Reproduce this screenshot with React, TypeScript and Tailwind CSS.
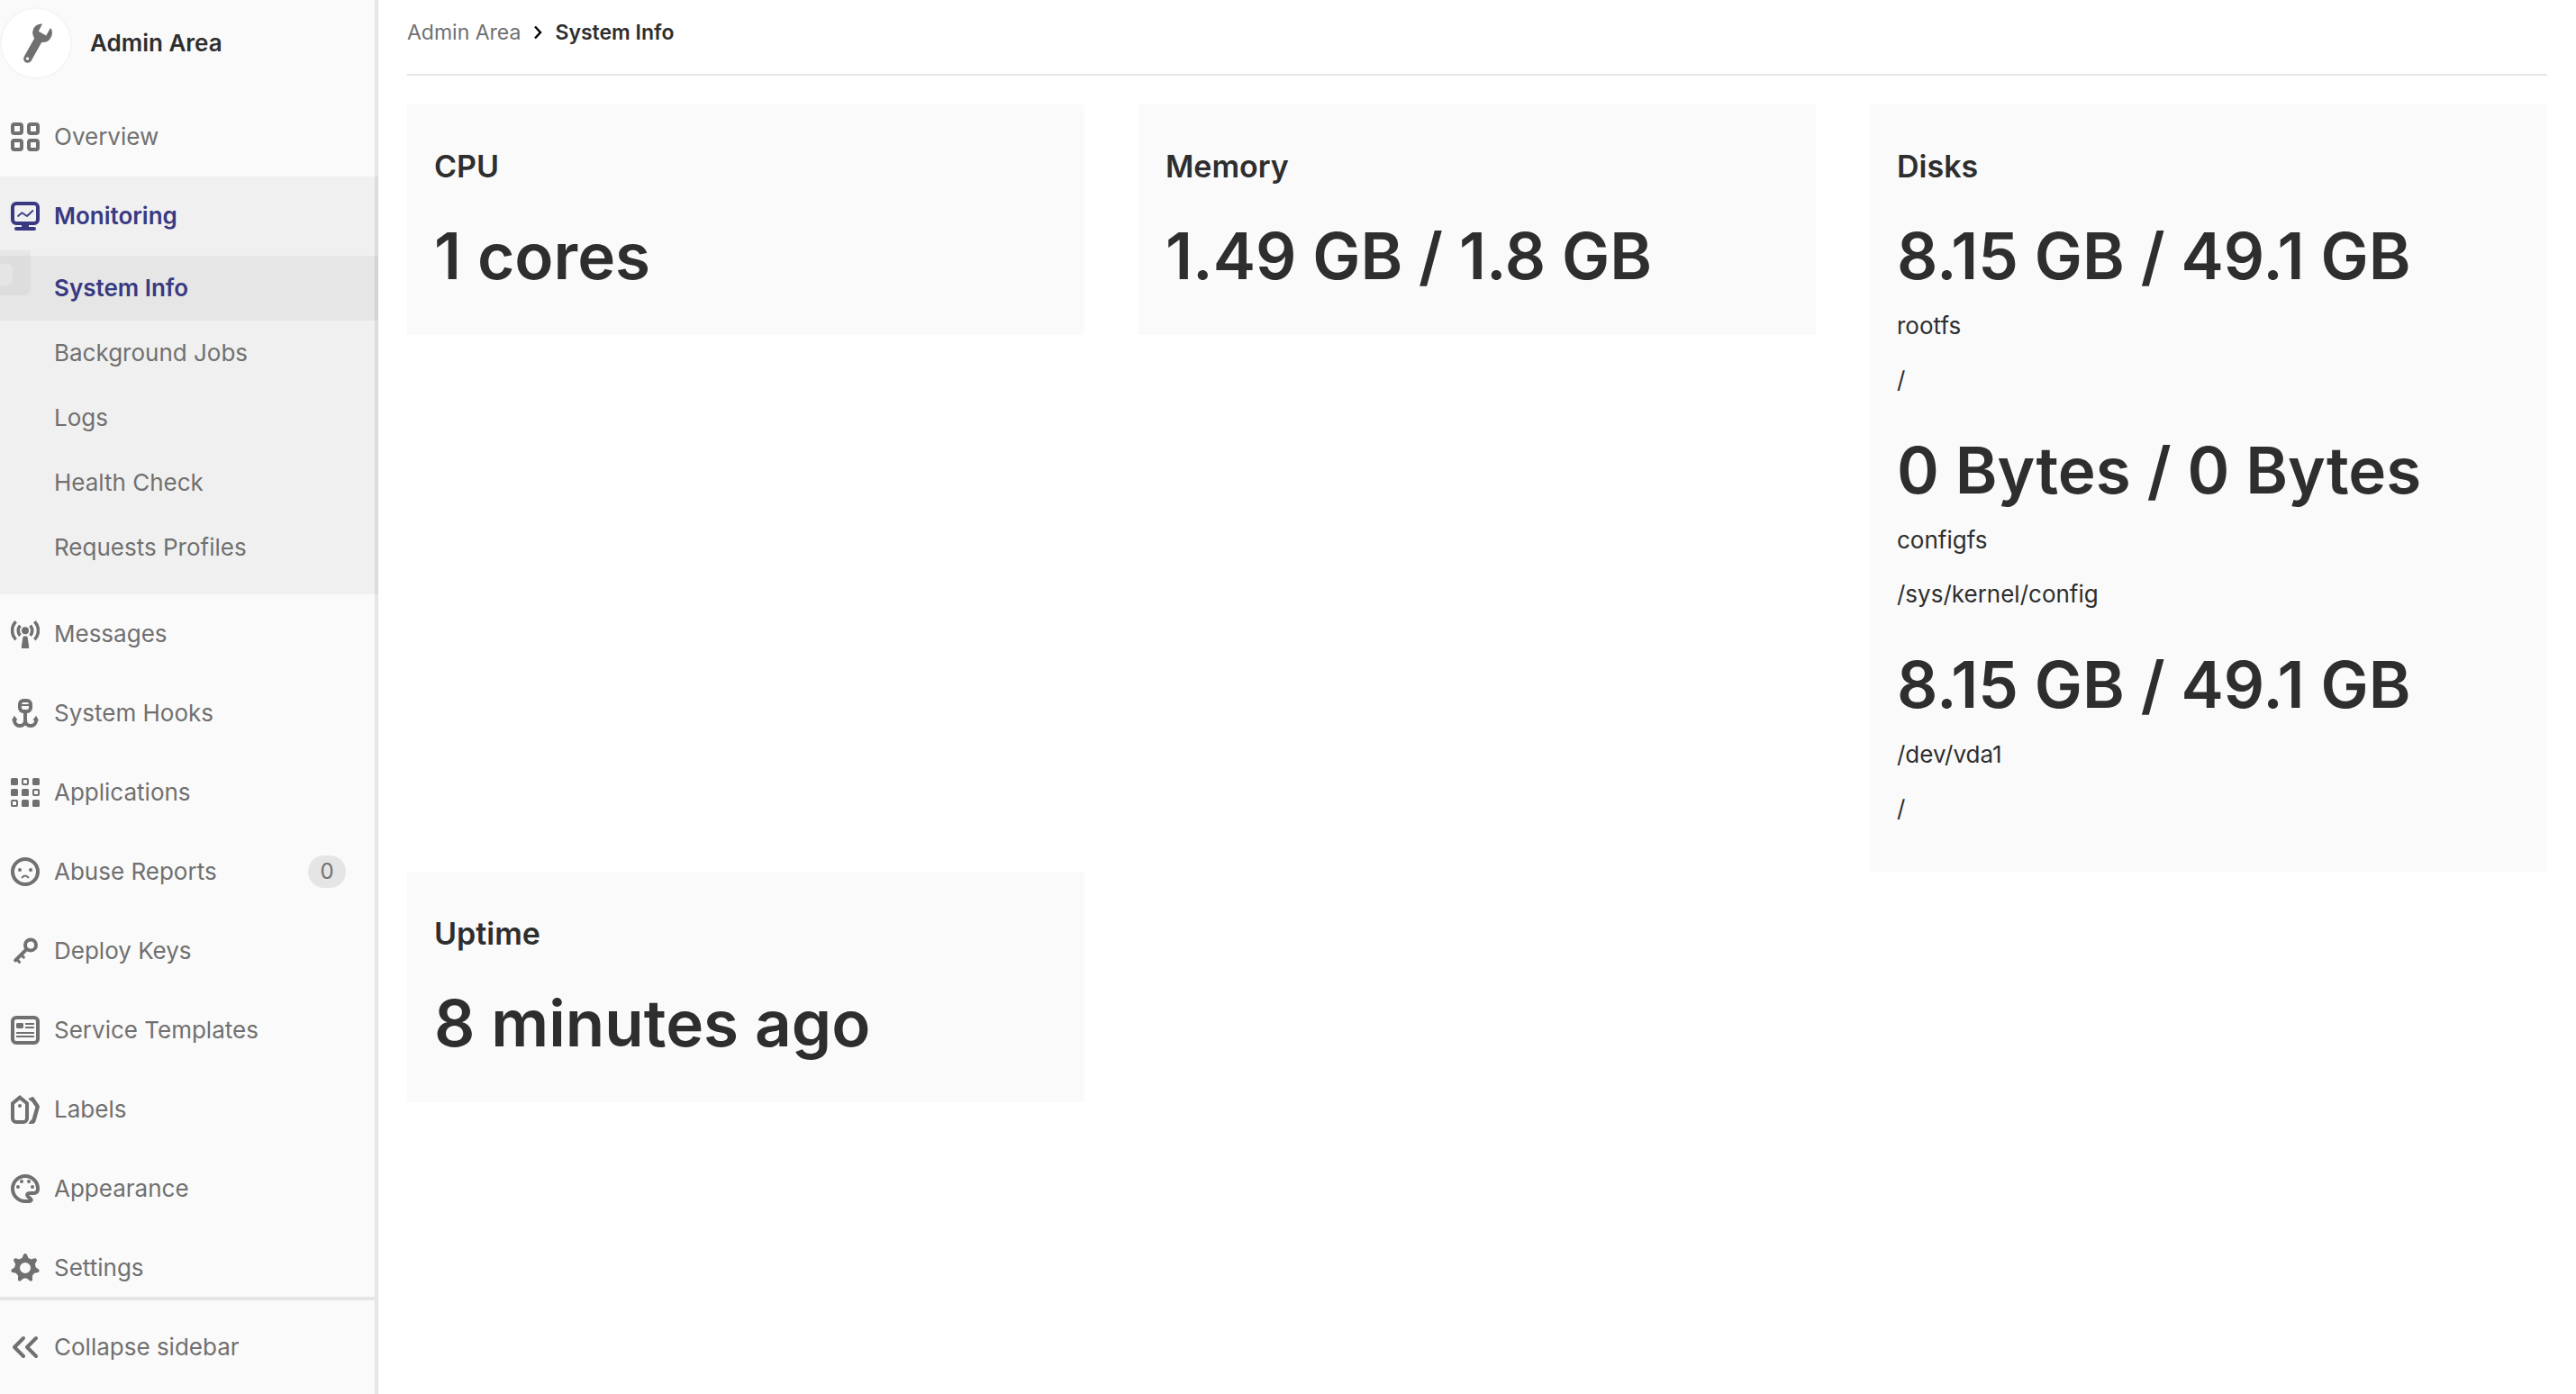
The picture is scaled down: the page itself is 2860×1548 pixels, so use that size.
import type { ReactNode } from "react";

function Icon({ children }: { children: ReactNode }) {
  return (
    <svg viewBox="0 0 16 16" className="size-8 shrink-0" fill="none" stroke="currentColor" strokeWidth="2" aria-hidden="true">
      {children}
    </svg>
  );
}

const OverviewIcon = () => (
  <Icon>
    <rect x="1" y="1" width="5" height="5" rx="1" />
    <rect x="10" y="1" width="5" height="5" rx="1" />
    <rect x="1" y="10" width="5" height="5" rx="1" />
    <rect x="10" y="10" width="5" height="5" rx="1" />
  </Icon>
);

const MonitorIcon = () => (
  <Icon>
    <rect x="1" y="1" width="14" height="11" rx="2" />
    <path d="M6 13h4v1H6z" fill="currentColor" stroke="none" />
    <path d="M3 15h10" strokeLinecap="round" />
    <path d="M4 8l2.2-1.9L9 8l3.2-3" strokeWidth="0.9" strokeLinecap="round" strokeLinejoin="round" />
  </Icon>
);

const MessagesIcon = () => (
  <Icon>
    <circle cx="8" cy="6.1" r="2" fill="currentColor" stroke="none" />
    <path d="M7.3 9.2h1.4q.5 0 .6.6l.8 5.4q.1.8-.7.8H6.6q-.8 0-.7-.8l.8-5.4q.1-.6.6-.6z" fill="currentColor" stroke="none" />
    <path d="M2.8 1.1a7.2 7.2 0 0 0 0 10M13.2 1.1a7.2 7.2 0 0 1 0 10" strokeWidth="1.8" />
    <path d="M5.2 3.3a4.2 4.2 0 0 0 0 5.6M10.8 3.3a4.2 4.2 0 0 1 0 5.6" strokeWidth="1.8" />
  </Icon>
);

const HookIcon = () => (
  <Icon>
    <rect x="5" y="1" width="6" height="6" rx="2" />
    <path d="M6 3.5h4" strokeWidth="1" />
    <path d="M8 7v5M2 11v1a3 3 0 0 0 6 0 3 3 0 0 0 6 0v-1" />
    <path d="M.5 12.1l1.4-2.7 1.9 2.3zM15.5 12.1l-1.4-2.7-1.9 2.3z" fill="currentColor" stroke="none" />
  </Icon>
);

const ApplicationsIcon = () => (
  <Icon>
    <g fill="currentColor" stroke="none">
      <rect x="0" y="0" width="4" height="4" rx="0.8" />
      <rect x="12" y="0" width="4" height="4" rx="0.8" />
      <rect x="0" y="6" width="4" height="4" rx="0.8" />
      <rect x="6" y="6" width="4" height="4" rx="0.8" />
      <rect x="6" y="12" width="4" height="4" rx="0.8" />
      <rect x="12" y="12" width="4" height="4" rx="0.8" />
    </g>
    <g strokeWidth="1">
      <rect x="6.5" y="0.5" width="3" height="3" rx="0.4" />
      <rect x="12.5" y="6.5" width="3" height="3" rx="0.4" />
      <rect x="0.5" y="12.5" width="3" height="3" rx="0.4" />
    </g>
  </Icon>
);

const AbuseIcon = () => (
  <Icon>
    <circle cx="8" cy="8" r="7" />
    <circle cx="5" cy="7" r="1" fill="currentColor" stroke="none" />
    <circle cx="11" cy="7" r="1" fill="currentColor" stroke="none" />
    <path d="M6.3 11.2q1.7-2 3.4 0" strokeWidth="1" strokeLinecap="round" />
  </Icon>
);

const KeyIcon = () => (
  <Icon>
    <circle cx="11" cy="4.7" r="3" />
    <path d="M8.9 6.9l-6.3 6.3" strokeLinecap="round" />
    <path d="M3.4 12.6l1.4 1.6M6 10.2l1.2 1.4" strokeWidth="1.5" strokeLinecap="round" />
  </Icon>
);

const TemplateIcon = () => (
  <Icon>
    <rect x="1" y="1" width="14" height="14" rx="2" />
    <rect x="3" y="4" width="4" height="3" rx="0.7" fill="currentColor" stroke="none" />
    <path d="M8.4 4.5h4.2M8.4 6.5h4.2M3.4 9.5h9.2M3.4 11.5h9.2" strokeWidth="1" strokeLinecap="round" />
  </Icon>
);

const LabelsIcon = () => (
  <Icon>
    <path d="M1 4.6l4-3.3 4 3.3V13a2 2 0 0 1-2 2H3a2 2 0 0 1-2-2z" />
    <circle cx="5" cy="6" r="1" fill="currentColor" stroke="none" />
    <path
      d="M9.7 2l2-.9q.7-.2 1.1.3l2.8 4.1q.5.6.3 1.4l-2 7.2Q13.4 16 11.9 16H9.8l1-1.7q.8-.3 1-1l1.9-6.7-2.1-3q-.5-.4-1-.5z"
      fill="currentColor"
      stroke="none"
    />
  </Icon>
);

const PaletteIcon = () => (
  <Icon>
    <path d="M8 1a7 7 0 1 0 0 14h2.3c1.2 0 1.3-.9.6-1.5l-1.1-.9c-1.2-1-.8-2.1.7-2.1h2.2c1.5 0 2.3-1 2.3-2.5A7 7 0 0 0 8 1z" />
    <g fill="currentColor" stroke="none">
      <circle cx="4" cy="7" r="1" />
      <circle cx="6" cy="4" r="1" />
      <circle cx="10" cy="4" r="1" />
      <circle cx="12" cy="7" r="1" />
    </g>
  </Icon>
);

const toothAngles = [0, 51.43, 102.86, 154.29, 205.71, 257.14, 308.57];

const GearIcon = () => (
  <Icon>
    <circle cx="8" cy="8" r="4.4" strokeWidth="2.8" />
    {toothAngles.map((angle) => (
      <path key={angle} d="M6 3.2L6.9 1q.2-1 1.1-1t1.1 1L10 3.2z" fill="currentColor" stroke="none" transform={`rotate(${angle} 8 8)`} />
    ))}
  </Icon>
);

const CollapseIcon = () => (
  <Icon>
    <path d="M7 3L2 8l5 5M14 3L9 8l5 5" strokeLinecap="round" strokeLinejoin="round" />
  </Icon>
);

const WrenchIcon = () => (
  <svg viewBox="0 0 32 44" className="h-11 w-8" fill="#707070" aria-hidden="true">
    <path
      fillRule="evenodd"
      d="M21 .4Q16 .2 12.7 3.6 9.4 7.2 10.4 12q.4 2.5 1.8 4.6L.8 36.8q-1.9 4.3 1.7 6.4 3.8 1.7 6.2-1.7L20.2 21q5.6.6 9-3.2 3.7-4.6 2.4-10.1-.5-1.6-1.6-2.7l-4.8 8.4-8.4-4.7zM4.5 37.4a1.7 1.7 0 1 1 0 3.4 1.7 1.7 0 0 1 0-3.4z"
    />
  </svg>
);

const subItems = ["System Info", "Background Jobs", "Logs", "Health Check", "Requests Profiles"];

const lowerItems: { label: string; icon: ReactNode; badge?: string }[] = [
  { label: "Messages", icon: <MessagesIcon /> },
  { label: "System Hooks", icon: <HookIcon /> },
  { label: "Applications", icon: <ApplicationsIcon /> },
  { label: "Abuse Reports", icon: <AbuseIcon />, badge: "0" },
  { label: "Deploy Keys", icon: <KeyIcon /> },
  { label: "Service Templates", icon: <TemplateIcon /> },
  { label: "Labels", icon: <LabelsIcon /> },
  { label: "Appearance", icon: <PaletteIcon /> },
  { label: "Settings", icon: <GearIcon /> },
];

function NavLink({ label, icon, badge }: { label: string; icon: ReactNode; badge?: string }) {
  return (
    <a href="#" className="flex h-22 items-center gap-4 pr-9 pl-3">
      {icon}
      <span className="flex-1">{label}</span>
      {badge && (
        <span className="flex h-9 w-[42px] items-center justify-center rounded-full bg-[#e5e5e5] text-[24px]">{badge}</span>
      )}
    </a>
  );
}

function Sidebar() {
  return (
    <aside className="flex h-screen w-[420px] shrink-0 flex-col bg-[#fafafa] text-[26px] leading-10 text-[#707070] shadow-[inset_-4px_0_0_#e5e5e5]">
      <nav className="min-h-0 flex-1 overflow-hidden">
        <a href="#" className="mt-2 mb-5 flex h-20 items-center gap-5 font-semibold text-[#2e2e2e]">
          <span className="flex size-20 items-center justify-center rounded-full border-2 border-[#f5f5f5] bg-white pl-1">
            <WrenchIcon />
          </span>
          Admin Area
        </a>
        <NavLink label="Overview" icon={<OverviewIcon />} />
        <div className="relative bg-black/[0.04] pb-4">
          <div className="font-semibold text-[#393982]">
            <NavLink label="Monitoring" icon={<MonitorIcon />} />
          </div>
          <ul>
            {subItems.map((item, i) => (
              <li key={item}>
                <a
                  href="#"
                  className={
                    i === 0
                      ? "flex h-18 items-center bg-black/[0.04] pl-15 font-semibold text-[#393982]"
                      : "flex h-18 items-center pl-15"
                  }
                >
                  {item}
                </a>
              </li>
            ))}
          </ul>
          <div className="absolute top-[82px] left-0 flex h-[50px] w-[34px] items-center rounded-br-lg bg-black/[0.04]">
            <div className="mt-1 h-6 w-3.5 rounded-r-md bg-[#e5e5e5]" />
          </div>
        </div>
        {lowerItems.map((item) => (
          <NavLink key={item.label} {...item} />
        ))}
      </nav>
      <button type="button" className="flex h-27 w-full shrink-0 items-center gap-4 border-t-4 border-[#e5e5e5] pl-3 text-left">
        <CollapseIcon />
        Collapse sidebar
      </button>
    </aside>
  );
}

function Card({ title, children }: { title: string; children: ReactNode }) {
  return (
    <section className="bg-[#fafafa] px-[30px] pt-[45px] pb-12">
      <h4 className="mb-[35px] text-[34px] leading-12 font-semibold">{title}</h4>
      {children}
    </section>
  );
}

function Figure({ children }: { children: ReactNode }) {
  return <h1 className="text-[71px] leading-20 font-semibold">{children}</h1>;
}

const disks = [
  { usage: "8.15 GB / 49.1 GB", device: "rootfs", mount: "/" },
  { usage: "0 Bytes / 0 Bytes", device: "configfs", mount: "/sys/kernel/config" },
  { usage: "8.15 GB / 49.1 GB", device: "/dev/vda1", mount: "/" },
];

export default function App() {
  return (
    <div className="flex min-h-screen bg-white font-['Inter',sans-serif] text-[#2e2e2e]">
      <Sidebar />
      <main className="min-w-0 flex-1 px-8">
        <nav aria-label="Breadcrumb" className="flex h-21 items-start gap-3.5 border-b-2 border-[#e5e5e5] pt-4 text-[23px] leading-10">
          <a href="#" className="text-[#707070]">Admin Area</a>
          <svg viewBox="0 0 10 16" className="mt-3 h-4 w-2.5" fill="none" stroke="#000" strokeWidth="2.4" aria-hidden="true">
            <path d="M2 1.5L8 8l-6 6.5" />
          </svg>
          <a href="#" className="font-semibold">System Info</a>
        </nav>
        <div className="mt-8 grid grid-cols-3 items-start gap-x-15">
          <Card title="CPU">
            <Figure>1 cores</Figure>
          </Card>
          <Card title="Memory">
            <Figure>1.49 GB / 1.8 GB</Figure>
          </Card>
          <Card title="Disks">
            <div className="flex flex-col gap-10 pb-0.5">
              {disks.map((disk, i) => (
                <div key={i}>
                  <Figure>{disk.usage}</Figure>
                  <p className="mt-[18px] text-[26px] leading-10">{disk.device}</p>
                  <p className="mt-5 text-[26px] leading-10">{disk.mount}</p>
                </div>
              ))}
            </div>
          </Card>
          <Card title="Uptime">
            <Figure>8 minutes ago</Figure>
          </Card>
        </div>
      </main>
    </div>
  );
}
